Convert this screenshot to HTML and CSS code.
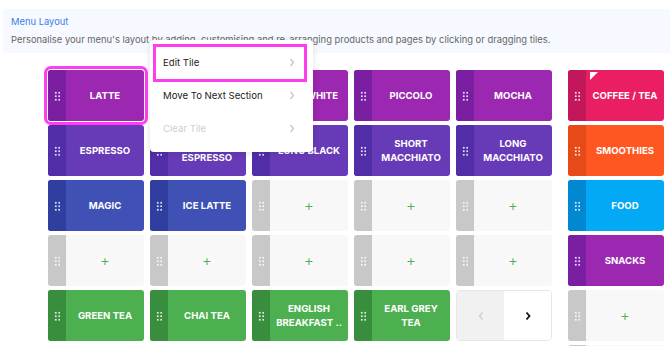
FILE: index.html
```html
<!DOCTYPE html>
<html lang="en">

<head>
    <meta charset="UTF-8">
    <meta name="viewport" content="width=device-width, initial-scale=1.0">
    <title>Menu Layout</title>
    <link rel="stylesheet" href="styles.css">
</head>

<body>
    <div class="intro">
        <div class="intro-title">Menu Layout</div>
        <div class="intro-text">Personalise your menu's layout by adding, customising and re-arranging products and pages by clicking or dragging tiles.</div>
    </div>

    <div class="board">
        <div class="tiles">
            <!-- row 1 -->
            <div class="tile purple is-selected"><span class="grip"></span><span class="label">LATTE</span></div>
            <div class="tile purple"><span class="grip"></span><span class="label"></span></div>
            <div class="tile purple"><span class="grip"></span><span class="label">FLAT WHITE</span></div>
            <div class="tile purple"><span class="grip"></span><span class="label">PICCOLO</span></div>
            <div class="tile purple"><span class="grip"></span><span class="label">MOCHA</span></div>
            <!-- row 2 -->
            <div class="tile violet"><span class="grip"></span><span class="label">ESPRESSO</span></div>
            <div class="tile violet"><span class="grip"></span><span class="label">DOUBLE<br>ESPRESSO</span></div>
            <div class="tile violet"><span class="grip"></span><span class="label">LONG BLACK</span></div>
            <div class="tile violet"><span class="grip"></span><span class="label">SHORT<br>MACCHIATO</span></div>
            <div class="tile violet"><span class="grip"></span><span class="label">LONG<br>MACCHIATO</span></div>
            <!-- row 3 -->
            <div class="tile indigo"><span class="grip"></span><span class="label">MAGIC</span></div>
            <div class="tile indigo"><span class="grip"></span><span class="label">ICE LATTE</span></div>
            <div class="tile empty"><span class="grip"></span><span class="label">+</span></div>
            <div class="tile empty"><span class="grip"></span><span class="label">+</span></div>
            <div class="tile empty"><span class="grip"></span><span class="label">+</span></div>
            <!-- row 4 -->
            <div class="tile empty"><span class="grip"></span><span class="label">+</span></div>
            <div class="tile empty"><span class="grip"></span><span class="label">+</span></div>
            <div class="tile empty"><span class="grip"></span><span class="label">+</span></div>
            <div class="tile empty"><span class="grip"></span><span class="label">+</span></div>
            <div class="tile empty"><span class="grip"></span><span class="label">+</span></div>
            <!-- row 5 -->
            <div class="tile green"><span class="grip"></span><span class="label">GREEN TEA</span></div>
            <div class="tile green"><span class="grip"></span><span class="label">CHAI TEA</span></div>
            <div class="tile green"><span class="grip"></span><span class="label">ENGLISH<br>BREAKFAST ..</span></div>
            <div class="tile green"><span class="grip"></span><span class="label">EARL GREY<br>TEA</span></div>
            <div class="pager">
                <span class="pager-btn prev">
                    <svg width="8" height="10" viewBox="0 0 8 10"><polyline points="5.5,1.5 2.5,5 5.5,8.5" fill="none" stroke="#d2d2d2" stroke-width="1.6"/></svg>
                </span>
                <span class="pager-btn next">
                    <svg width="8" height="10" viewBox="0 0 8 10"><polyline points="2.5,1.5 5.5,5 2.5,8.5" fill="none" stroke="#111" stroke-width="1.8"/></svg>
                </span>
            </div>
        </div>

        <div class="pages">
            <div class="tile pink"><span class="grip"></span><span class="label">COFFEE / TEA</span><span class="corner"></span></div>
            <div class="tile orange"><span class="grip"></span><span class="label">SMOOTHIES</span></div>
            <div class="tile sky"><span class="grip"></span><span class="label">FOOD</span></div>
            <div class="tile purple"><span class="grip"></span><span class="label">SNACKS</span></div>
            <div class="tile empty"><span class="grip"></span><span class="label">+</span></div>
            <div class="tile empty"><span class="grip"></span><span class="label"></span></div>
        </div>
    </div>

    <div class="menu">
        <span class="menu-focus"></span>
        <div class="menu-item">Edit Tile
            <svg width="6" height="9" viewBox="0 0 6 9"><polyline points="1.5,1 4.5,4.5 1.5,8" fill="none" stroke="#c4c4c4" stroke-width="1.2"/></svg>
        </div>
        <div class="menu-item">Move To Next Section
            <svg width="6" height="9" viewBox="0 0 6 9"><polyline points="1.5,1 4.5,4.5 1.5,8" fill="none" stroke="#c4c4c4" stroke-width="1.2"/></svg>
        </div>
        <div class="menu-item disabled">Clear Tile
            <svg width="6" height="9" viewBox="0 0 6 9"><polyline points="1.5,1 4.5,4.5 1.5,8" fill="none" stroke="#c4c4c4" stroke-width="1.2"/></svg>
        </div>
    </div>
</body>

</html>
```

FILE: styles.css
```css
body {
    margin: 0;
    height: 346px;
    overflow: hidden;
    background: #fff;
    font-family: Inter, "Liberation Sans", sans-serif;
    position: relative;
}

.intro {
    margin: 9px 0 0 3px;
    height: 44px;
    padding: 6px 8px 0;
    box-sizing: border-box;
    background: #f6f9ff;
    border-radius: 3px 0 0 3px;
    font-size: 9.4px;
}

.intro-title {
    color: #3d7fe8;
    line-height: 14px;
}

.intro-text {
    margin-top: 4px;
    color: #666;
    line-height: 14px;
}

.board {
    display: flex;
    align-items: flex-start;
    gap: 16px;
    margin: 17px 0 0 48px;
}

.tiles {
    display: grid;
    grid-template-columns: repeat(5, 96px);
    grid-auto-rows: 51px;
    gap: 4px 6px;
}

.pages {
    display: grid;
    grid-template-columns: 96px;
    grid-auto-rows: 51px;
    gap: 4px;
}

.tile {
    position: relative;
    display: flex;
    border-radius: 3px;
    overflow: hidden;
    color: #fff;
    font-size: 9.6px;
    font-weight: 700;
}

.tile .grip {
    flex: 0 0 18px;
    display: flex;
    align-items: center;
    justify-content: center;
}

.tile .grip::before {
    content: "";
    width: 6px;
    height: 10px;
    background: radial-gradient(circle, rgba(255, 255, 255, 0.85) 0.9px, transparent 1.2px) 0 0 / 3.5px 3.5px;
}

.tile .label {
    flex: 1;
    display: flex;
    align-items: center;
    justify-content: center;
    text-align: center;
    line-height: 14px;
}

.tile.is-selected {
    overflow: visible;
    outline: 3px solid #ff3cf0;
    outline-offset: 1px;
}

.tile.is-selected .grip {
    border-radius: 3px 0 0 3px;
}

.corner {
    position: absolute;
    left: 22px;
    top: 2px;
    width: 0;
    height: 0;
    border-top: 8px solid #fff;
    border-right: 8px solid transparent;
}

.purple { background: #9c27b0; }
.purple .grip { background: #7b1fa2; }
.violet { background: #673ab7; }
.violet .grip { background: #512da8; }
.indigo { background: #3f51b5; }
.indigo .grip { background: #303f9f; }
.green { background: #4caf50; }
.green .grip { background: #388e3c; }
.pink { background: #e91e63; }
.pink .grip { background: #c2185b; }
.orange { background: #ff5722; }
.orange .grip { background: #e64a19; }
.sky { background: #03a9f4; }
.sky .grip { background: #0288d1; }

.empty { background: #f8f8f8; }
.empty .grip { background: #c8c8c8; }
.empty .label {
    color: #4caf50;
    font-size: 15px;
    font-weight: 300;
}

.pager {
    display: flex;
    border: 1px solid #e6e6e6;
    border-radius: 4px;
    overflow: hidden;
}

.pager-btn {
    flex: 1;
    display: flex;
    align-items: center;
    justify-content: center;
    background: #fff;
}

.pager-btn.prev {
    background: #f1f1f1;
}

.menu {
    position: absolute;
    left: 150px;
    top: 40px;
    width: 163px;
    padding: 6px 0 7px;
    background: #fff;
    border-radius: 4px;
    box-shadow: 0 1px 6px rgba(0, 0, 0, 0.12);
    font-size: 9.6px;
    color: #222;
}

.menu-item {
    height: 33px;
    display: flex;
    align-items: center;
    justify-content: space-between;
    padding: 0 18px 0 13px;
}

.menu-item.disabled {
    color: #cfcfcf;
}

.menu-focus {
    position: absolute;
    left: 3px;
    top: 4px;
    width: 154px;
    height: 38px;
    box-sizing: border-box;
    border: 3px solid #ff3cf0;
}
```
